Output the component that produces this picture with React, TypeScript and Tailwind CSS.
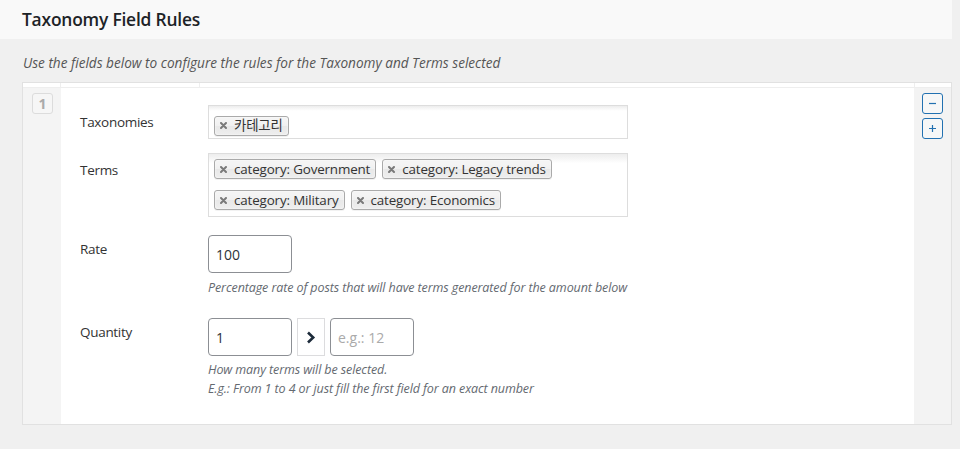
import React from "react";

const FONT = "font-['Segoe_UI','Open_Sans','Noto_Sans_CJK_KR',sans-serif]";

function Tag({ label }: { label: string }) {
  return (
    <span className="inline-flex items-center h-[20px] mr-[6px] pl-[5px] pr-[5px] rounded-[3px] border border-[#aaa] bg-[linear-gradient(#f4f4f4_20%,#f0f0f0_50%,#e8e8e8_52%,#eee_100%)] shadow-[inset_0_0_2px_#fff,0_1px_0_rgba(0,0,0,0.05)] text-[13.4px] leading-[13px] text-[#333]">
      <svg width="7" height="7" viewBox="0 0 7 7" className="mr-[7px]">
        <path d="M1 1 L6 6 M6 1 L1 6" stroke="#7a7a7a" strokeWidth="2" strokeLinecap="round" />
      </svg>
      <span className="tracking-[-0.15px]">{label}</span>
    </span>
  );
}

export default function App() {
  return (
    <div className={`w-[960px] h-[449px] bg-[#f0f0f0] overflow-hidden ${FONT}`}>
      {/* header */}
      <div className="w-[952px] h-[39px] bg-[#f9f9f9] pl-[22px] flex items-center">
        <h2 className="text-[17.4px] font-semibold text-[#1d2327] tracking-[-0.2px]">Taxonomy Field Rules</h2>
      </div>
      {/* description */}
      <div className="h-[43px] pl-[23px] pt-[14px]">
        <p className="text-[13.6px] italic text-[#555] leading-[20px]">
          Use the fields below to configure the rules for the Taxonomy and Terms selected
        </p>
      </div>
      {/* panel */}
      <div className="ml-[22px] w-[930px] h-[343px] border border-[#e1e1e1] bg-white flex flex-col">
        <div className="h-[5px] flex border-b border-[#eee]">
          <div className="w-[38px] border-r border-[#eee]" />
          <div className="w-[139px] border-r border-[#eee]" />
          <div className="flex-1 border-r border-[#eee]" />
          <div className="w-[36px]" />
        </div>
        <div className="flex flex-1">
          {/* order col */}
          <div className="w-[38px] bg-[#f4f4f4] pt-[5px] pl-[9px]">
            <div className="w-[21px] h-[21px] rounded-[3px] border border-[#dcdcdc] bg-[#f6f6f6] flex items-center justify-center text-[14px] font-bold text-[#aaa]">
              1
            </div>
          </div>
          {/* fields */}
          <div className="flex-1 bg-white pl-[19px] pt-[17px]">
            {/* Taxonomies */}
            <div className="flex">
              <div className="w-[128px] pt-[7px] text-[13.5px] leading-[20px] text-[#333] tracking-[-0.3px]">Taxonomies</div>
              <div className="w-[420px] h-[34px] border border-[#ddd] bg-[linear-gradient(#eee_1%,#fff_15%)] pl-[5px] pt-[5px]">
                <Tag label="카테고리" />
              </div>
            </div>
            {/* Terms */}
            <div className="flex mt-[14px]">
              <div className="w-[128px] pt-[7px] text-[13.5px] leading-[20px] text-[#333] tracking-[-0.3px]">Terms</div>
              <div className="w-[420px] h-[64px] border border-[#ddd] bg-[linear-gradient(#eee_1%,#fff_15%)] pl-[5px] pt-[5px] flex flex-wrap content-start gap-y-[11px]">
                <Tag label="category: Government" />
                <Tag label="category: Legacy trends" />
                <Tag label="category: Military" />
                <Tag label="category: Economics" />
              </div>
            </div>
            {/* Rate */}
            <div className="flex mt-[18px]">
              <div className="w-[128px] pt-[4px] text-[13.5px] leading-[20px] text-[#333] tracking-[-0.3px]">Rate</div>
              <div className="flex flex-col">
                <div className="w-[84px] h-[38px] rounded-[4px] border border-[#8c8f94] flex items-center pl-[7px] text-[14px] text-[#2c3338]">
                  100
                </div>
                <p className="mt-[6px] text-[12.5px] italic leading-[18px] text-[#646970] tracking-[-0.1px]">
                  Percentage rate of posts that will have terms generated for the amount below
                </p>
              </div>
            </div>
            {/* Quantity */}
            <div className="flex mt-[21px]">
              <div className="w-[128px] pt-[4px] text-[13.5px] leading-[20px] text-[#333] tracking-[-0.3px]">Quantity</div>
              <div className="flex flex-col">
                <div className="flex gap-[5px]">
                  <div className="w-[84px] h-[38px] rounded-[4px] border border-[#8c8f94] flex items-center pl-[7px] text-[14px] text-[#2c3338]">
                    1
                  </div>
                  <div className="w-[28px] h-[38px] border border-[#dcdcde] flex items-center justify-center">
                    <svg width="10" height="13" viewBox="0 0 10 13">
                      <path d="M2 1.5 L7.2 6.5 L2 11.5" fill="none" stroke="#1d2b3a" strokeWidth="2.6" />
                    </svg>
                  </div>
                  <div className="w-[84px] h-[38px] rounded-[4px] border border-[#8c8f94] flex items-center pl-[7px] text-[14px] text-[#aaa]">
                    e.g.: 12
                  </div>
                </div>
                <p className="mt-[4px] text-[12.5px] italic leading-[19px] text-[#646970] tracking-[-0.1px]">
                  How many terms will be selected.
                </p>
                <p className="text-[12.5px] italic leading-[19px] text-[#646970] tracking-[-0.1px]">
                  E.g.: From 1 to 4 or just fill the first field for an exact number
                </p>
              </div>
            </div>
          </div>
          {/* actions col */}
          <div className="w-[37px] bg-[#f3f3f3] pt-[5px] pl-[8px] flex flex-col gap-[4px]">
            <div className="w-[21px] h-[21px] rounded-[3px] border border-[#2271b1] bg-[#f6f7f7] flex items-center justify-center">
              <svg width="9" height="9" viewBox="0 0 9 9">
                <path d="M1 4.5 H8" stroke="#2271b1" strokeWidth="1.2" />
              </svg>
            </div>
            <div className="w-[21px] h-[21px] rounded-[3px] border border-[#2271b1] bg-[#f6f7f7] flex items-center justify-center">
              <svg width="9" height="9" viewBox="0 0 9 9">
                <path d="M1 4.5 H8 M4.5 1 V8" stroke="#2271b1" strokeWidth="1.2" />
              </svg>
            </div>
          </div>
        </div>
      </div>
    </div>
  );
}
